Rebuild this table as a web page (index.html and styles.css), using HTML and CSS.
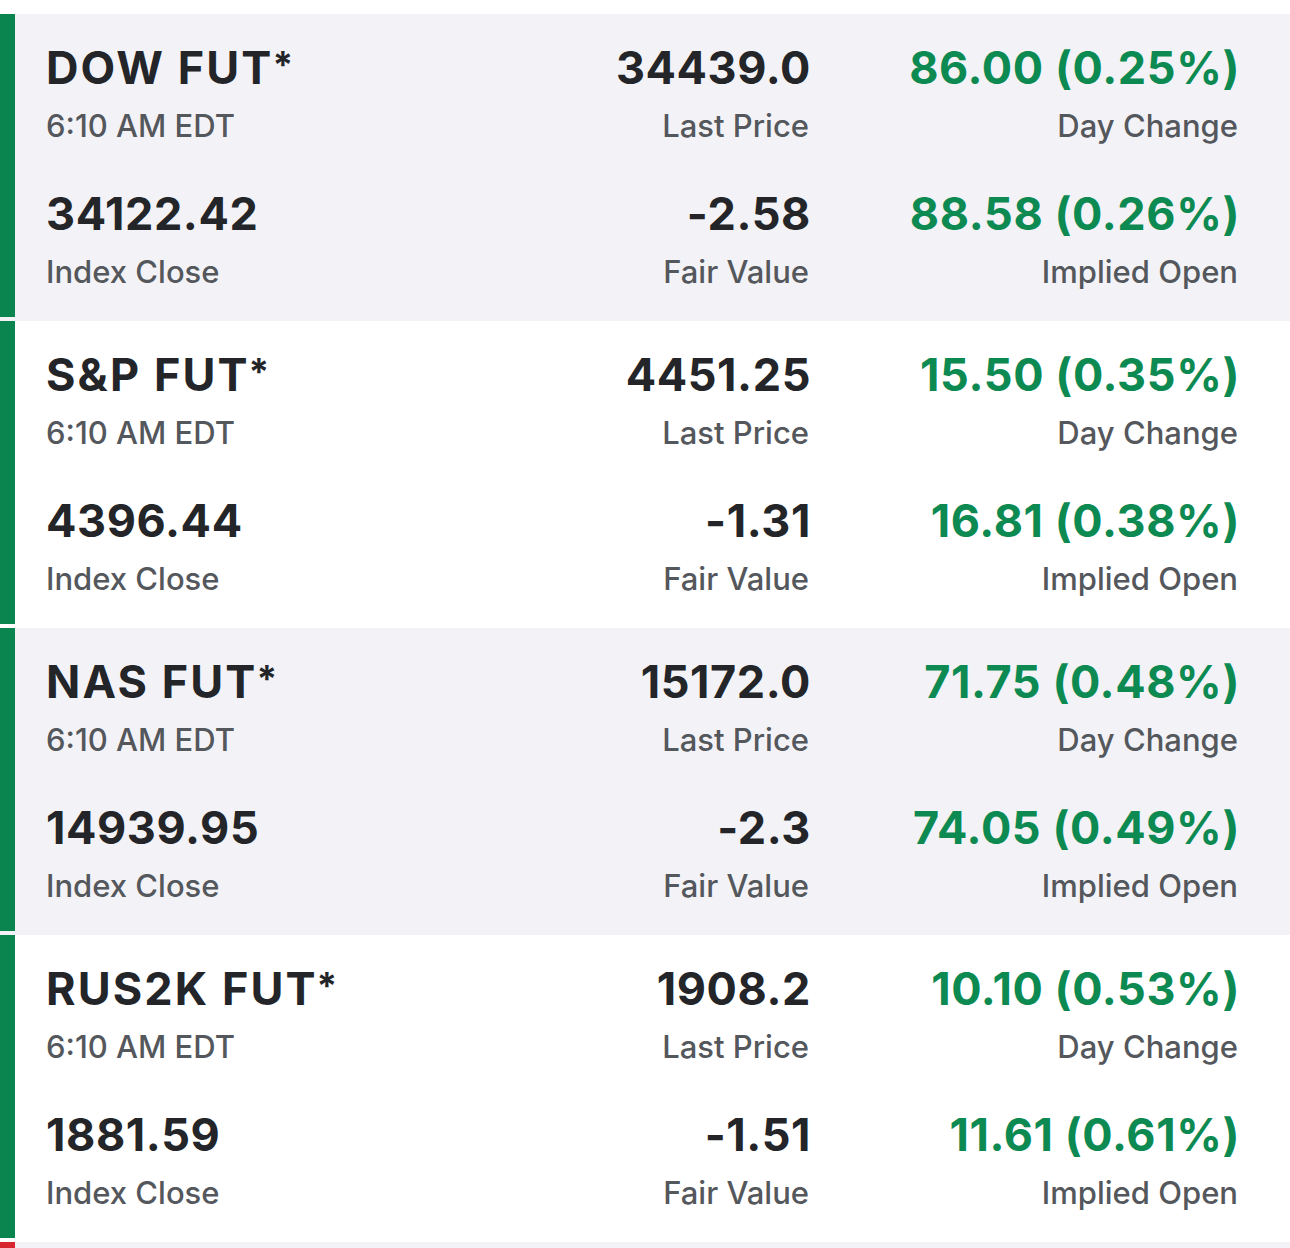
FILE: index.html
```html
<!DOCTYPE html>
<html lang="en">
<head>
<meta charset="utf-8">
<title>Futures</title>
<link rel="stylesheet" href="styles.css">
</head>
<body>
<main class="list">
  <section class="row shade">
    <div class="bar"></div>
    <div class="grid">
      <div class="cell left"><div class="val title">DOW FUT<span class="ast">*</span></div><div class="lbl">6:10 AM EDT</div></div>
      <div class="cell right"><div class="val">34439.0</div><div class="lbl">Last Price</div></div>
      <div class="cell right"><div class="val up">86.00 (0.25%)</div><div class="lbl">Day Change</div></div>
      <div class="cell left"><div class="val">34122.42</div><div class="lbl">Index Close</div></div>
      <div class="cell right"><div class="val">-2.58</div><div class="lbl">Fair Value</div></div>
      <div class="cell right"><div class="val up">88.58 (0.26%)</div><div class="lbl">Implied Open</div></div>
    </div>
  </section>
  <section class="row">
    <div class="bar"></div>
    <div class="grid">
      <div class="cell left"><div class="val title">S&amp;P FUT<span class="ast">*</span></div><div class="lbl">6:10 AM EDT</div></div>
      <div class="cell right"><div class="val">4451.25</div><div class="lbl">Last Price</div></div>
      <div class="cell right"><div class="val up">15.50 (0.35%)</div><div class="lbl">Day Change</div></div>
      <div class="cell left"><div class="val">4396.44</div><div class="lbl">Index Close</div></div>
      <div class="cell right"><div class="val">-1.31</div><div class="lbl">Fair Value</div></div>
      <div class="cell right"><div class="val up">16.81 (0.38%)</div><div class="lbl">Implied Open</div></div>
    </div>
  </section>
  <section class="row shade">
    <div class="bar"></div>
    <div class="grid">
      <div class="cell left"><div class="val title">NAS FUT<span class="ast">*</span></div><div class="lbl">6:10 AM EDT</div></div>
      <div class="cell right"><div class="val">15172.0</div><div class="lbl">Last Price</div></div>
      <div class="cell right"><div class="val up">71.75 (0.48%)</div><div class="lbl">Day Change</div></div>
      <div class="cell left"><div class="val">14939.95</div><div class="lbl">Index Close</div></div>
      <div class="cell right"><div class="val">-2.3</div><div class="lbl">Fair Value</div></div>
      <div class="cell right"><div class="val up">74.05 (0.49%)</div><div class="lbl">Implied Open</div></div>
    </div>
  </section>
  <section class="row">
    <div class="bar"></div>
    <div class="grid">
      <div class="cell left"><div class="val title">RUS2K FUT<span class="ast">*</span></div><div class="lbl">6:10 AM EDT</div></div>
      <div class="cell right"><div class="val">1908.2</div><div class="lbl">Last Price</div></div>
      <div class="cell right"><div class="val up">10.10 (0.53%)</div><div class="lbl">Day Change</div></div>
      <div class="cell left"><div class="val">1881.59</div><div class="lbl">Index Close</div></div>
      <div class="cell right"><div class="val">-1.51</div><div class="lbl">Fair Value</div></div>
      <div class="cell right"><div class="val up">11.61 (0.61%)</div><div class="lbl">Implied Open</div></div>
    </div>
  </section>
  <section class="row shade stub">
    <div class="bar down"></div>
    <div class="grid"></div>
  </section>
</main>
</body>
</html>
```

FILE: styles.css
```css
html, body {
  margin: 0;
  padding: 0;
  background: #ffffff;
}
body {
  font-family: "Inter", "Lato", "Liberation Sans", sans-serif;
  color: #232529;
}
.list {
  padding-top: 14px;
}
.row {
  display: flex;
  background: #ffffff;
}
.row.shade {
  background: #f3f3f7;
}
.bar {
  flex: 0 0 15px;
  background: #0b8550;
  margin-bottom: 4px;
}
.bar.down {
  background: #d7262d;
}
.grid {
  flex: 1;
  display: grid;
  grid-template-columns: 1fr 300px 429px;
  row-gap: 40px;
  padding: 26px 52px 29px 31px;
}
.stub .grid {
  min-height: 60px;
}
.cell.right {
  text-align: right;
}
.val {
  font-size: 45px;
  line-height: 56px;
  font-weight: 700;
  letter-spacing: 0.6px;
  white-space: nowrap;
  color: #232529;
}
.cell.right .val {
  margin-right: -2px;
}
.val.title {
  letter-spacing: 2.1px;
}
.ast {
  font-size: 37px;
  line-height: 0;
  letter-spacing: 0;
  vertical-align: 6px;
  margin-left: -1px;
}
.val.up {
  color: #0c8a52;
}
.lbl {
  margin-top: 10px;
  font-size: 31px;
  line-height: 40px;
  font-weight: 500;
  color: #54575c;
  white-space: nowrap;
}
```
